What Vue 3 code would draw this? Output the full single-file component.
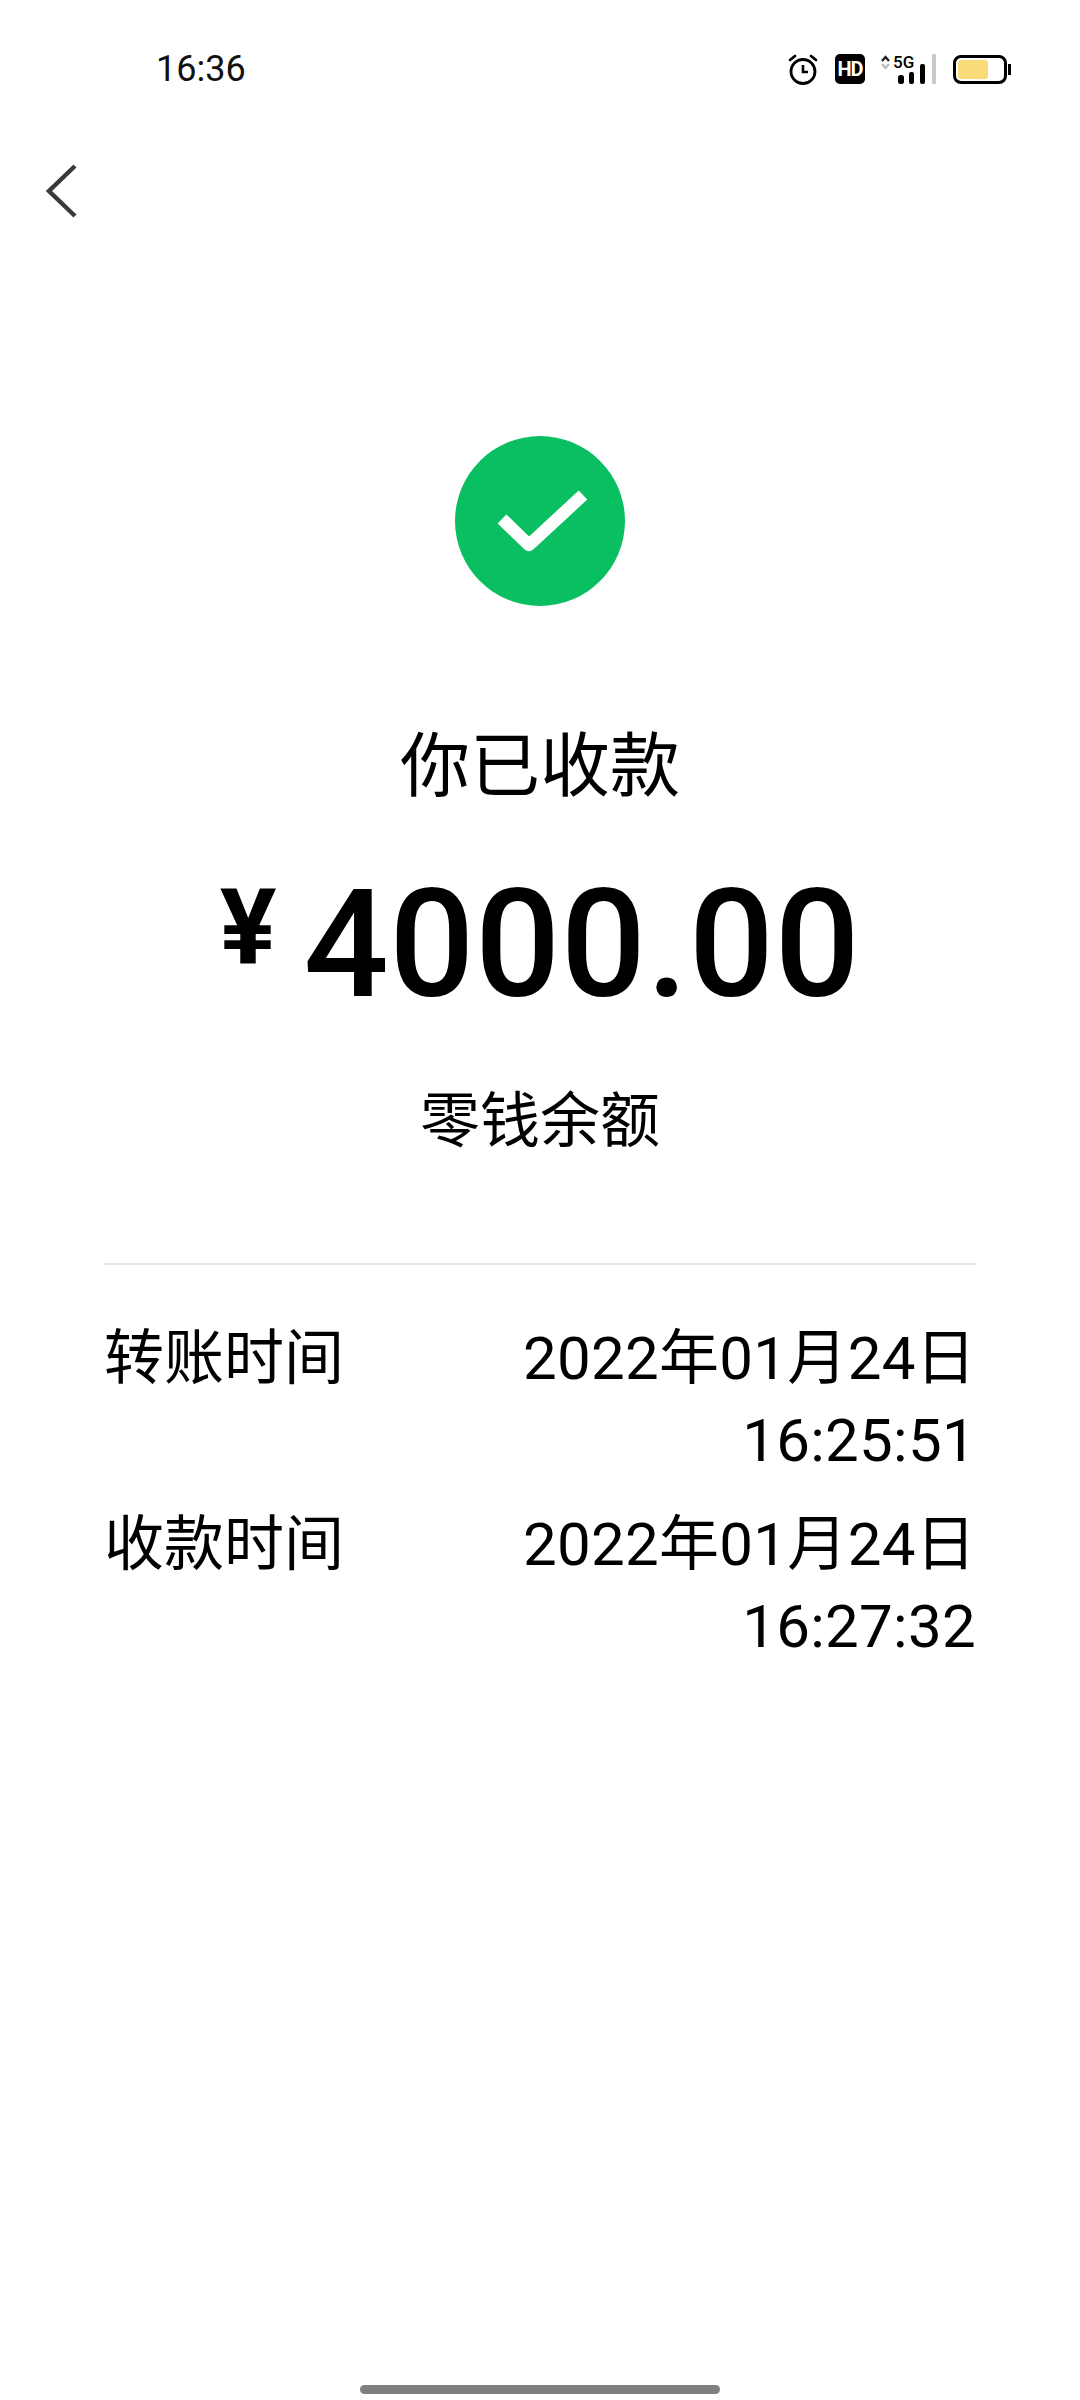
<script setup>
const rows = [
  { label: "转账时间", date: "2022年01月24日", time: "16:25:51" },
  { label: "收款时间", date: "2022年01月24日", time: "16:27:32" }
];
</script>

<template>
  <main class="page">
    <header class="status">
      <span class="clock">16:36</span>
      <div class="status-icons">
        <svg width="32" height="32" viewBox="0 0 32 32" fill="none" stroke="#000" stroke-width="2.8">
          <circle cx="16" cy="18.5" r="12" />
          <path d="M16 12v7h5" stroke-width="2.6" />
          <path d="M3 7l5-4M29 7l-5-4" stroke-linecap="round" />
        </svg>
        <span class="hd">HD</span>
        <svg class="net" width="56" height="38" viewBox="0 -4 56 38">
          <path d="M1 7l3.5-4 3.5 4" fill="none" stroke="#222" stroke-width="2.4" />
          <path d="M1 10l3.5 4 3.5-4" fill="none" stroke="#bbb" stroke-width="2.4" />
          <text x="12" y="14" class="five-g">5G</text>
          <rect x="17" y="21" width="6" height="9" rx="2.5" fill="#000" />
          <rect x="28" y="18" width="5" height="12" rx="2" fill="#000" />
          <rect x="39" y="10" width="5" height="20" rx="2" fill="#000" />
          <rect x="51" y="0" width="4" height="30" rx="1" fill="#c8c8c8" />
        </svg>
        <div class="battery">
          <div class="battery-body"><div class="battery-fill"></div></div>
          <div class="battery-cap"></div>
        </div>
      </div>
    </header>

    <div class="nav">
      <svg width="32" height="54" viewBox="0 0 32 54" fill="none" stroke="#3a3a3a" stroke-width="4.4">
        <path d="M29 2L3 27l26 25" />
      </svg>
    </div>

    <section class="result">
      <div class="ok">
        <svg width="170" height="170" viewBox="0 0 170 170">
          <circle cx="85" cy="85" r="85" fill="#0abf61" />
          <path d="M47 83l27 26 54-50" fill="none" stroke="#fff" stroke-width="12.5" stroke-linejoin="round" />
        </svg>
      </div>
      <h1>你已收款</h1>
      <div class="amount"><span class="yen">¥</span><span class="num">4000.00</span></div>
      <p class="source">零钱余额</p>
    </section>

    <section class="details">
      <div v-for="row in rows" :key="row.label" class="row">
        <span class="label">{{ row.label }}</span>
        <span class="value">{{ row.date }}<br />{{ row.time }}</span>
      </div>
    </section>

    <div class="home-bar"></div>
  </main>
</template>

<style>
html, body {
  margin: 0;
  background: #fff;
}
</style>

<style scoped>
.page {
  position: relative;
  width: 1080px;
  height: 2400px;
  background: #fff;
  color: #000;
  font-family: Roboto, "Noto Sans CJK SC", sans-serif;
  overflow: hidden;
}

.status {
  display: flex;
  justify-content: space-between;
  align-items: center;
  height: 138px;
  padding: 0 69px 0 156px;
}

.clock {
  font-size: 36px;
  color: #111;
}

.status-icons {
  display: flex;
  align-items: center;
  gap: 16px;
}

.hd {
  width: 30px;
  height: 30px;
  border-radius: 5px;
  background: #000;
  color: #fff;
  font-size: 20px;
  font-weight: 700;
  line-height: 30px;
  letter-spacing: -1px;
  text-align: center;
}

.five-g {
  font-size: 17px;
  font-weight: 500;
  font-family: Roboto, sans-serif;
}

.battery {
  display: flex;
  align-items: center;
}

.battery-body {
  box-sizing: border-box;
  width: 54px;
  height: 29px;
  padding: 2px;
  border: 3px solid #000;
  border-radius: 8px;
}

.battery-fill {
  width: 30px;
  height: 100%;
  background: #f9dc78;
  border-radius: 3px;
}

.battery-cap {
  width: 3px;
  height: 11px;
  margin-left: 1px;
  background: #000;
}

.nav {
  padding: 26px 0 0 46px;
  height: 54px;
}

.result {
  display: flex;
  flex-direction: column;
  align-items: center;
  padding-top: 218px;
}

.ok {
  height: 170px;
}

h1 {
  margin: 120px 0 0;
  font-size: 70px;
  font-weight: 400;
  line-height: 82px;
}

.amount {
  display: flex;
  align-items: flex-start;
  margin-top: 62px;
  font-family: Roboto, sans-serif;
}

.yen {
  margin: 5px 27px 0 0;
  font-size: 106px;
  font-weight: 700;
  line-height: 106px;
}

.num {
  font-size: 150px;
  font-weight: 500;
  line-height: 150px;
  letter-spacing: 0.5px;
}

.source {
  margin: 67px 0 0;
  font-size: 60px;
  line-height: 70px;
}

.details {
  margin: 106px 104px 0;
  padding-top: 53px;
  border-top: 2px solid #e4e4e4;
}

.row {
  display: flex;
  justify-content: space-between;
  margin-bottom: 22px;
  font-size: 60px;
  line-height: 82px;
}

.value {
  letter-spacing: 0.3px;
  text-align: right;
}

.home-bar {
  position: absolute;
  left: 360px;
  bottom: 6px;
  width: 360px;
  height: 9px;
  border-radius: 5px;
  background: #808080;
}
</style>
